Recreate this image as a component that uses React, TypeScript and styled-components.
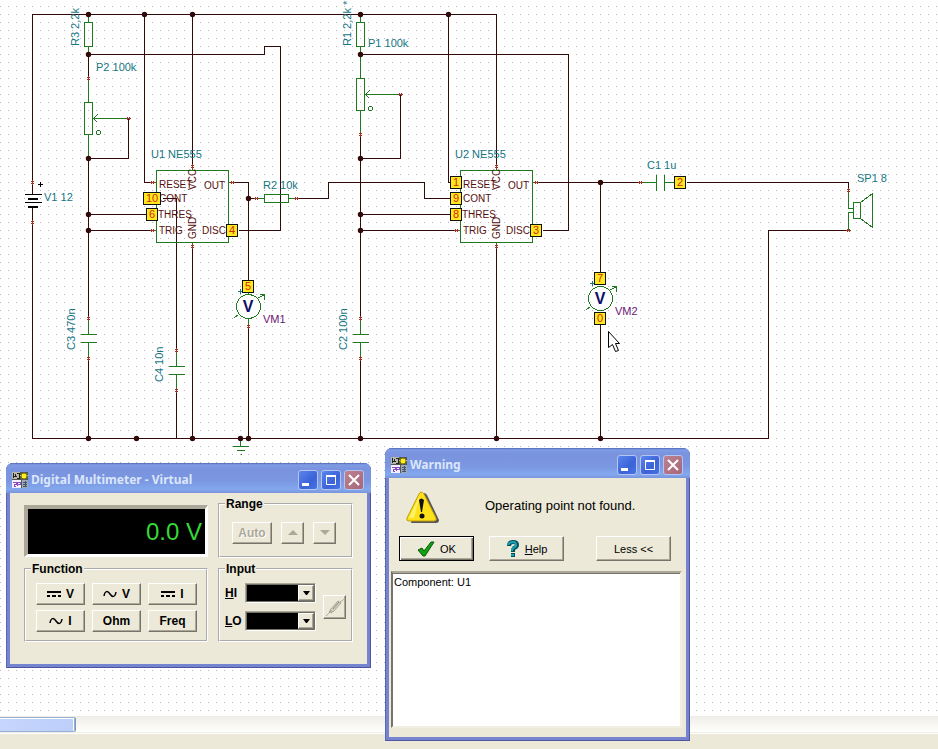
import React from "react";
import styled, { createGlobalStyle, css } from "styled-components";

const SANS = '"Liberation Sans", Arial, sans-serif';
const WIRE = "#330a0a";
const PART = "#1f7a1f";
const FACE = "#ece9d8";
const SHADE = "#aca899";

const GlobalStyle = createGlobalStyle`
  * { box-sizing: border-box; }
  body { margin: 0; background: ${FACE}; font-family: ${SANS}; overflow: hidden; }
`;

const Page = styled.main`
  position: relative;
  display: flex;
  flex-direction: column;
  height: 100vh;
`;

const Sheet = styled.section`
  flex: 1;
  min-height: 0;
  overflow: hidden;
  background-color: #fff;
  background-image: linear-gradient(90deg, transparent 1px, #fff 1px),
    linear-gradient(#b4b4b4 1px, transparent 1px);
  background-size: 8px 8px;
  background-position: 0 6px;
`;

const Drawing = styled.svg`
  display: block;
  width: 100%;
  height: 470px;
  overflow: visible;
`;

const ScrollTrack = styled.div`
  height: 17px;
  border-top: 1px solid #eeede5;
  border-bottom: 1px solid #eeede5;
  background: linear-gradient(#f1efe9, #fefefb);
`;

const ScrollThumb = styled.div`
  width: 8%;
  height: 15px;
  border: 1px solid #98b0d8;
  border-left: 0;
  border-radius: 0 2px 2px 0;
  box-shadow: inset -1px 1px 0 #fff, 1px 0 0 #7f98b8;
  background: linear-gradient(90deg, #c6d5fc, #bccffa);
`;

const StatusStrip = styled.footer`
  height: 16px;
  border-top: 1px solid #fff;
  background: ${FACE};
`;

/* ---------- schematic text ---------- */

const Label = styled.text<{ $tone?: "part" | "meter" | "pin" }>`
  font: ${(p) => (p.$tone === "pin" ? 10 : 11)}px ${SANS};
  fill: ${(p) =>
    p.$tone === "pin" ? "#561010" : p.$tone === "meter" ? "#6b1670" : "#157583"};
`;

const NodeText = styled.text`
  font: 11px ${SANS};
  fill: #d02a10;
  text-anchor: middle;
`;

const MeterLetter = styled.text`
  font: bold 16px ${SANS};
  fill: #0c0c66;
  text-anchor: middle;
`;

const Dot = ({ x, y }: { x: number; y: number }) => (
  <circle cx={x} cy={y} r="2.7" fill={WIRE} stroke="none" shapeRendering="auto" />
);

const Pin = ({ x, y, v }: { x: number; y: number; v?: boolean }) => (
  <path
    stroke="#a03424"
    d={
      v
        ? `M${x - 2} ${y - 1}h3M${x - 2} ${y + 1}h3M${x} ${y - 3}v5`
        : `M${x - 1} ${y - 2}v3M${x + 1} ${y - 2}v3M${x - 3} ${y}h5`
    }
  />
);

const Tag = ({ x, y, n }: { x: number; y: number; n: string }) => {
  const w = n.length > 1 ? 17 : 11;
  return (
    <g>
      <rect x={x} y={y} width={w} height="12" fill="#ffe81e" stroke="#111" transform="translate(.5 .5)" shapeRendering="crispEdges" />
      <NodeText x={x + Math.ceil(w / 2)} y={y + 10}>{n}</NodeText>
    </g>
  );
};

const pins: [string, number, number][] = [
  ["RESET", 159, 188],
  ["CONT", 159, 202],
  ["THRES", 158, 218],
  ["TRIG", 159, 234],
  ["OUT", 204, 189],
  ["DISC", 202, 234],
];

const Meter = ({ x, y }: { x: number; y: number }) => (
  <g fill="none" stroke={PART}>
    <circle cx={x} cy={y} r="12" fill="#fff" />
    <path d={`M${x + 9} ${y - 8}L${x + 16} ${y - 12}M${x + 11} ${y - 12}h5v5M${x - 10} ${y + 8}L${x - 14} ${y + 11}`} />
    <path stroke="#157583" d={`M${x - 11} ${y - 15}h5M${x - 8} ${y - 18}v5`} />
  </g>
);

function Schematic() {
  return (
    <Drawing role="img" aria-label="NE555 oscillator schematic">
      <g transform="translate(.5 .5)" fill="none" strokeWidth="1" shapeRendering="crispEdges">
        <g stroke={WIRE}>
          <path d="M32 194V14H496V166M32 206V438H768V230H848" />
          <path d="M88 54H264V46H280V230H238M88 54V78M128 118V158H88V318M88 358V438" />
          <path d="M144 14V182H152M192 14V166M88 214H148M88 230H152M162 198H176V350M176 390V438M192 246V438" />
          <path d="M232 182H248V282M248 198H256M248 326V438M296 198H328V182H424V198H452" />
          <path d="M360 54H568V230H542M400 94V158H360M360 134V318M360 358V438" />
          <path d="M448 14V182H452M360 214H452M360 230H456M496 246V438" />
          <path d="M536 182H640M600 182V274M600 324V438M686 182H848V190" />
        </g>
        <g stroke={PART}>
          <path d="M88 14V22M84 22H92V46H84ZM88 46V54M88 78V102M84 102H92V134H84ZM88 134V158" />
          <path d="M128 118H93M97 114L93 118L97 122M400 94H365M369 90L365 94L369 98" />
          <path d="M360 14V22M356 22H364V46H356ZM360 46V78M356 78H364V110H356ZM360 110V134" />
          <path d="M88 318V334M80 334H96M80 342H96M88 342V358M360 318V334M352 334H368M352 342H368M360 342V358" />
          <path d="M176 350V366M168 366H184M168 374H184M176 374V390" />
          <path d="M156 170H228V242H156ZM460 170H532V242H460ZM152 182H156M152 230H156M192 166V170M192 242V246M228 182H232M456 230H460M496 166V170M496 242V246M532 182H536" />
          <path d="M256 198H264M264 194H288V202H264ZM288 198H296" />
          <path d="M640 182H656M656 174V190M664 174V190M664 182H674" />
          <path d="M848 190V208H853M853 202H860V218H853ZM853 212H848V230M860 202L872 193V227L860 218" />
          <path d="M240 438V446M232 446H248M236 450H244M240 454H241M248 292V294M248 318V326" />
          <circle cx="98" cy="132" r="2" />
          <circle cx="370" cy="108" r="2" />
        </g>
        <g stroke="#000">
          <path d="M24 194H41M24 202H41M37 184H42M40 181V186" />
          <path strokeWidth="2" d="M27 198H37M27 206H37" />
        </g>
        {[[88, 14], [144, 14], [192, 14], [360, 14], [448, 14], [88, 54], [360, 54], [88, 158], [360, 158],
          [88, 214], [88, 230], [360, 214], [360, 230], [248, 198], [600, 182], [88, 438], [136, 438],
          [192, 438], [240, 438], [248, 438], [360, 438], [496, 438], [600, 438]].map(([x, y]) => (
          <Dot key={`${x}-${y}`} x={x} y={y} />
        ))}
        {[[32, 182], [32, 222], [88, 78], [88, 318], [88, 358], [176, 350], [176, 390], [192, 166], [192, 246],
          [248, 326], [360, 134], [360, 318], [360, 358], [496, 166], [496, 246], [848, 190]].map(([x, y]) => (
          <Pin key={`${x}-${y}`} x={x} y={y} v />
        ))}
        {[[128, 118], [400, 94], [152, 182], [152, 230], [232, 182], [256, 198], [296, 198], [456, 230],
          [536, 182], [640, 182], [848, 230]].map(([x, y]) => (
          <Pin key={`${x}-${y}`} x={x} y={y} />
        ))}
        <Meter x={248} y={306} />
        <Meter x={600} y={298} />
      </g>

      {[0, 304].map((dx) => (
        <g key={dx}>
          {pins.map(([t, x, y]) => (
            <Label key={t} $tone="pin" x={x + dx} y={y}>{t}</Label>
          ))}
          <Label $tone="pin" transform={`translate(${196 + dx} 190) rotate(-90)`}>VCC</Label>
          <Label $tone="pin" transform={`translate(${196 + dx} 239) rotate(-90)`}>GND</Label>
        </g>
      ))}

      <Label transform="translate(79 46) rotate(-90)">R3 2,2k</Label>
      <Label transform="translate(351 46) rotate(-90)">R1 2,2k *</Label>
      <Label transform="translate(75 350) rotate(-90)">C3 470n</Label>
      <Label transform="translate(163 382) rotate(-90)">C4 10n</Label>
      <Label transform="translate(347 350) rotate(-90)">C2 100n</Label>
      <Label x="96" y="71">P2 100k</Label>
      <Label x="368" y="47">P1 100k</Label>
      <Label x="151" y="158">U1 NE555</Label>
      <Label x="455" y="158">U2 NE555</Label>
      <Label x="44" y="201">V1 12</Label>
      <Label x="263" y="189">R2 10k</Label>
      <Label x="647" y="169">C1 1u</Label>
      <Label x="857" y="182">SP1 8</Label>
      <Label $tone="meter" x="263" y="323">VM1</Label>
      <Label $tone="meter" x="615" y="315">VM2</Label>
      <MeterLetter x="248" y="312">V</MeterLetter>
      <MeterLetter x="600" y="304">V</MeterLetter>

      <Tag x={143} y={192} n="10" />
      <Tag x={146} y={208} n="6" />
      <Tag x={226} y={224} n="4" />
      <Tag x={242} y={280} n="5" />
      <Tag x={450} y={176} n="1" />
      <Tag x={450} y={192} n="9" />
      <Tag x={450} y={208} n="8" />
      <Tag x={530} y={224} n="3" />
      <Tag x={594} y={272} n="7" />
      <Tag x={594} y={312} n="0" />
      <Tag x={674} y={176} n="2" />

      <path d="M608.500 331.500V347.500L612.500 344.500L615.500 351.500L618.500 350.500L615.500 343.500H619.500Z" fill="#fff" stroke="#000" />
    </Drawing>
  );
}

/* ---------- desktop windows ---------- */

const Frame = styled.section<{ $x: number; $y: number; $w: number }>`
  position: absolute;
  left: ${(p) => p.$x}px;
  top: ${(p) => p.$y}px;
  width: ${(p) => p.$w}px;
  display: flex;
  flex-direction: column;
  padding: 0 4px 4px;
  border-radius: 7px 7px 0 0;
  background: #7684cf;
  box-shadow: inset 1px 0 0 #5866b4, inset -1px -1px 0 #50559f;
`;

const TitleBar = styled.header`
  display: flex;
  align-items: center;
  gap: 3px;
  height: 30px;
  margin: 0 -4px;
  padding: 3px 7px 0 6px;
  border-radius: 7px 7px 0 0;
  background: linear-gradient(#5069b4 0, #7f9ce6 6%, #7a93de 20%, #7b97e1 60%, #83a8ee 88%, #7a94dc 100%);
`;

const Title = styled.h2`
  flex: 1;
  margin: 0;
  font: bold 12px "Noto Sans", "Open Sans", sans-serif;
  line-height: 20px;
  color: #dbe6fb;
  white-space: nowrap;
`;

const CaptionButton = styled.button<{ $close?: boolean }>`
  display: grid;
  place-items: center;
  width: 20px;
  height: 20px;
  padding: 0;
  border: 1px solid #b5c5f3;
  border-radius: 3px;
  background: ${(p) =>
    p.$close
      ? "linear-gradient(135deg, #bd8192, #a66878)"
      : "linear-gradient(135deg, #5b86ec, #3c62d8 60%, #4674e6)"};
`;

const Body = styled.div`
  background: ${FACE};
`;

function AppIcon() {
  return (
    <svg width="16" height="16" shapeRendering="crispEdges" aria-hidden="true">
      <rect width="16" height="16" fill="#555" />
      <rect width="8" height="7" fill="#b9b9a8" />
      <path d="M1 1v5M3 2v3M5 1h2v5h-2M1 4h4" stroke="#222" fill="none" />
      <path d="M8 3h8" stroke="#ddd" />
      <circle cx="12" cy="4" r="3" fill="#ffee22" stroke="#777700" shapeRendering="auto" />
      <rect y="8" width="9" height="8" fill="#f4f0ff" />
      <path d="M1 10h3v2h-2v2h2M5 14v-4h3v2h-3" stroke="#8d4bc0" fill="none" />
      <rect x="10" y="8" width="6" height="8" fill="#9daab8" />
      <path d="M11 10h4M11 12h4M11 14h4M13 9v6" stroke="#46526a" />
    </svg>
  );
}

function Caption({ text }: { text: string }) {
  return (
    <TitleBar>
      <AppIcon />
      <Title>{text}</Title>
      <CaptionButton type="button" aria-label="Minimize">
        <svg width="14" height="14"><path d="M1 10h7v3H1z" fill="#fff" /></svg>
      </CaptionButton>
      <CaptionButton type="button" aria-label="Maximize">
        <svg width="14" height="14" fill="none" stroke="#fff"><path d="M2 3h10" strokeWidth="2" /><path d="M2.500 2.500h9v9h-9z" /></svg>
      </CaptionButton>
      <CaptionButton type="button" aria-label="Close" $close>
        <svg width="14" height="14" stroke="#fff" strokeWidth="2"><path d="M2 2l10 10M12 2L2 12" /></svg>
      </CaptionButton>
    </TitleBar>
  );
}

const raised = css`
  border: 1px solid;
  border-color: #fff #77746a #77746a #fff;
  box-shadow: inset -1px -1px 0 ${SHADE};
  background: ${FACE};
`;

const PushButton = styled.button`
  ${raised}
  display: flex;
  align-items: center;
  justify-content: center;
  gap: 5px;
  min-width: 0;
  height: 22px;
  padding: 0;
  font: bold 12px ${SANS};
  color: #000;
  &:disabled {
    color: ${SHADE};
    text-shadow: 1px 1px 0 #fff;
  }
`;

const MeterBody = styled(Body)`
  display: grid;
  grid-template-columns: 184fr 135fr;
  gap: 4px 10px;
  padding: 4px 14px 22px;
`;

const Display = styled.output`
  display: flex;
  align-items: center;
  justify-content: flex-end;
  height: 52px;
  margin-top: 8px;
  padding-right: 3px;
  border: solid;
  border-width: 4px 3px 3px 4px;
  border-color: ${SHADE} #fff #fff ${SHADE};
  background: #000;
  font-size: 24px;
  color: #35d835;
`;

const Group = styled.fieldset`
  min-width: 0;
  margin: 0;
  padding: 0 9px;
  border: 2px groove #fff;
`;

const Legend = styled.legend`
  height: 14px;
  padding: 0 1px;
  margin-left: -4px;
  font: bold 12px/14px ${SANS};
`;

const FunctionKeys = styled.div`
  display: grid;
  grid-template-columns: repeat(3, 1fr);
  gap: 5px 7px;
  padding: 7px 0 8px 1px;
`;

const RangeKeys = styled.div`
  display: grid;
  grid-template-columns: 40px 23px 23px;
  gap: 9px;
  padding: 11px 3px 12px;
`;

const InputGrid = styled.div`
  display: grid;
  grid-template-columns: 1fr 23px;
  align-items: center;
  gap: 7px;
  padding: 7px 0 8px;
  margin: 0 -4px;
`;

const Channels = styled.div`
  display: grid;
  gap: 8px;
`;

const Channel = styled.label`
  display: grid;
  grid-template-columns: 20px 1fr;
  align-items: center;
  font: bold 12px ${SANS};
`;

const Mnemonic = styled.span`
  text-decoration: underline;
`;

const SelectBox = styled.span`
  display: grid;
  border: 1px solid;
  border-color: ${SHADE} #fff #fff ${SHADE};
  > * { grid-area: 1 / 1; }
`;

const Select = styled.select`
  appearance: none;
  width: 100%;
  height: 18px;
  border: 1px solid #716f64;
  border-radius: 0;
  background: #000;
  color: #fff;
`;

const DropArrow = styled.span`
  ${raised}
  justify-self: end;
  display: grid;
  place-items: center;
  width: 16px;
  margin: 1px;
  pointer-events: none;
`;

const ProbeButton = styled(PushButton)`
  height: 24px;
`;

const Dc = () => (
  <svg width="14" height="8" stroke="#000" strokeWidth="2" aria-hidden="true">
    <path d="M0 2h14M0 6h3M5 6h4M11 6h3" shapeRendering="crispEdges" />
  </svg>
);

const Ac = () => (
  <svg width="14" height="8" stroke="#000" strokeWidth="1.500" fill="none" aria-hidden="true">
    <path d="M1 6C2 0 5 1 7 4S12 8 13 2" />
  </svg>
);

function Multimeter() {
  return (
    <Frame $x={6} $y={463} $w={365}>
      <Caption text="Digital Multimeter - Virtual" />
      <MeterBody>
        <Display>0.0 V</Display>
        <Group>
          <Legend>Range</Legend>
          <RangeKeys>
            <PushButton disabled>Auto</PushButton>
            <PushButton disabled aria-label="Range up">
              <svg width="10" height="6"><path d="M0 5L5 0L10 5Z" fill={SHADE} /></svg>
            </PushButton>
            <PushButton disabled aria-label="Range down">
              <svg width="10" height="6"><path d="M0 0L5 5L10 0Z" fill={SHADE} /></svg>
            </PushButton>
          </RangeKeys>
        </Group>
        <Group>
          <Legend>Function</Legend>
          <FunctionKeys>
            <PushButton><Dc />V</PushButton>
            <PushButton><Ac />V</PushButton>
            <PushButton><Dc />I</PushButton>
            <PushButton><Ac />I</PushButton>
            <PushButton>Ohm</PushButton>
            <PushButton>Freq</PushButton>
          </FunctionKeys>
        </Group>
        <Group>
          <Legend>Input</Legend>
          <InputGrid>
            <Channels>
              {["HI", "LO"].map((name) => (
                <Channel key={name}>
                  <span><Mnemonic>{name[0]}</Mnemonic>{name[1]}</span>
                  <SelectBox>
                    <Select aria-label={name} />
                    <DropArrow>
                      <svg width="7" height="4"><path d="M0 0h7L4 4H3z" fill="#000" /></svg>
                    </DropArrow>
                  </SelectBox>
                </Channel>
              ))}
            </Channels>
            <ProbeButton disabled aria-label="Probe">
              <svg width="20" height="20" fill="none" stroke={SHADE}>
                <path d="M1 19L6 14M15 5C17 3 17 5 19 2" />
                <path d="M5 13L13 4L16 6L8 15Z" fill="#d2cebf" />
                <path d="M8 12L14 5M4 14L7 16" stroke="#8e8b7f" />
              </svg>
            </ProbeButton>
          </InputGrid>
        </Group>
      </MeterBody>
    </Frame>
  );
}

const WarningBody = styled(Body)`
  display: flex;
  flex-direction: column;
  padding: 12px 4px 9px 2px;
`;

const Message = styled.div`
  display: grid;
  grid-template-columns: 34px 1fr;
  align-items: center;
  gap: 45px;
  height: 34px;
  padding-left: 15px;
  p {
    margin: 0 0 4px;
    font-size: 13px;
    white-space: nowrap;
  }
`;

const Actions = styled.div`
  display: flex;
  gap: 15px;
  padding: 12px 11px 10px 8px;
  > :last-child { margin-left: auto; }
`;

const DialogButton = styled(PushButton)<{ $primary?: boolean }>`
  width: 75px;
  height: 25px;
  font: 11px ${SANS};
  ${(p) =>
    p.$primary &&
    css`
      border-color: #000;
      box-shadow: inset 1px 1px 0 #fff, inset -1px -1px 0 #77746a, inset -2px -2px 0 ${SHADE};
    `}
`;

const Details = styled.textarea`
  display: block;
  width: 100%;
  height: 157px;
  padding: 3px 1px;
  resize: none;
  outline: 0;
  border: 2px solid;
  border-color: ${SHADE} #f1efe2 #f1efe2 #77746a;
  box-shadow: inset 0 1px 0 #77746a;
  font: 11px/13px ${SANS};
  color: #000;
`;

function WarningDialog() {
  return (
    <Frame $x={385} $y={448} $w={305}>
      <Caption text="Warning" />
      <WarningBody>
        <Message>
          <svg width="34" height="34" aria-hidden="true">
            <path d="M15 5Q18 1 21 5L33 30Q33 33 30 33H5Z" fill="#555" />
            <path d="M13 4Q15 0 18 4L30 28Q31 31 28 31H3Q0 31 1 28Z" fill="#ffe11a" stroke="#c09a08" />
            <path d="M14 5L3 28H8Z" fill="#fff36a" />
            <path d="M13 10Q15 7 18 10L16 22H15Z" fill="#111" />
            <circle cx="16" cy="26" r="2.500" fill="#111" />
          </svg>
          <p>Operating point not found.</p>
        </Message>
        <Actions>
          <DialogButton $primary>
            <svg width="18" height="16" aria-hidden="true">
              <path d="M1 9L5 7L7 10L14 1L17 1L8 15H6Z" fill="#12a012" stroke="#075a07" />
            </svg>
            OK
          </DialogButton>
          <DialogButton>
            <svg width="14" height="17" fill="none" aria-hidden="true">
              <path d="M3 6Q3 2 7 2Q11 2 11 5Q11 7 8 8Q7 9 7 12M5 15H9" stroke="#064d58" strokeWidth="4" />
              <path d="M2 5Q3 2 7 2Q10 2 10 5Q10 7 7 8Q6 9 6 11M5 15H8" stroke="#13a6b6" strokeWidth="2" />
            </svg>
            <span><Mnemonic>H</Mnemonic>elp</span>
          </DialogButton>
          <DialogButton>{"Less <<"}</DialogButton>
        </Actions>
        <Details readOnly aria-label="Details" defaultValue="Component: U1" />
      </WarningBody>
    </Frame>
  );
}

export default function App() {
  return (
    <Page>
      <GlobalStyle />
      <Sheet>
        <Schematic />
      </Sheet>
      <ScrollTrack>
        <ScrollThumb />
      </ScrollTrack>
      <StatusStrip />
      <Multimeter />
      <WarningDialog />
    </Page>
  );
}
